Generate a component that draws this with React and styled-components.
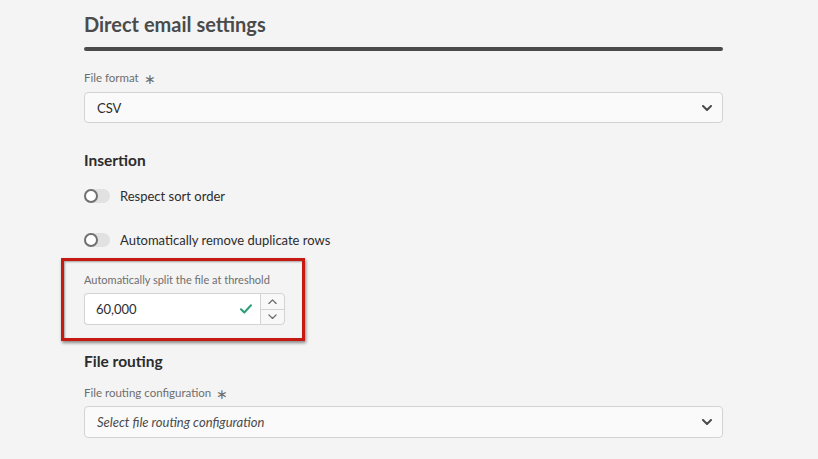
import React from "react";
import styled, { createGlobalStyle } from "styled-components";

const Global = createGlobalStyle`
  html, body { margin: 0; padding: 0; background: #f4f4f4; }
  body { font-family: Lato, "Open Sans", sans-serif; -webkit-font-smoothing: antialiased; }
  * { box-sizing: border-box; }
`;

const Page = styled.div`
  width: 818px;
  height: 459px;
  overflow: hidden;
  background: #f4f4f4;
  padding-left: 84px;
`;

const Column = styled.div`
  width: 639px;
  display: flex;
  flex-direction: column;
`;

const Title = styled.h1`
  margin: 12px 0 0;
  font-size: 20px;
  line-height: 24px;
  font-weight: 700;
  color: #4b4b4b;
`;

const Divider = styled.div`
  margin-top: 11px;
  height: 4px;
  border-radius: 2px;
  background: #4b4b4b;
`;

const Label = styled.div`
  margin-top: ${(p) => p.$mt}px;
  font-size: ${(p) => p.$size || 11.5}px;
  line-height: 16px;
  color: #6e6e6e;
  white-space: nowrap;
  display: flex;
  align-items: center;
  gap: 5px;
`;

const Star = styled.span`
  font-size: 14px;
  line-height: 16px;
  color: #6e6e6e;
  transform: translateY(1px);
`;

const Select = styled.div`
  margin-top: ${(p) => p.$mt}px;
  height: ${(p) => p.$h}px;
  border: 1px solid #d3d3d3;
  border-radius: 4px;
  background: #fafafa;
  display: flex;
  align-items: center;
  justify-content: space-between;
  padding: 0 10px 0 12px;
`;

const SelectText = styled.span`
  font-size: 13px;
  color: ${(p) => (p.$placeholder ? "#4b4b4b" : "#2c2c2c")};
  font-style: ${(p) => (p.$placeholder ? "italic" : "normal")};
`;

const Heading = styled.h2`
  margin: ${(p) => p.$mt}px 0 0;
  font-size: 15.5px;
  line-height: 20px;
  font-weight: 700;
  color: #2c2c2c;
`;

const ToggleRow = styled.label`
  margin-top: ${(p) => p.$mt}px;
  height: 20px;
  display: flex;
  align-items: center;
  gap: 10px;
  font-size: 13px;
  color: #2c2c2c;
`;

const Track = styled.span`
  position: relative;
  width: 26px;
  height: 14px;
  border-radius: 7px;
  background: #e1e1e1;
  flex: none;
`;

const Knob = styled.span`
  position: absolute;
  left: 0;
  top: 0;
  width: 14px;
  height: 14px;
  border-radius: 50%;
  border: 2px solid #707070;
  background: #fff;
`;

const Highlight = styled.div`
  margin: 8px 0 0 -23px;
  width: 244px;
  border: 3px solid #c41a12;
  box-shadow: 1px 2px 3px rgba(0, 0, 0, 0.45), inset 1px 1px 2px rgba(0, 0, 0, 0.35);
  padding: 11px 17px 13px 20px;
`;

const NumberField = styled.div`
  margin-top: 5px;
  display: flex;
  height: 32px;
  width: 201px;
`;

const NumberInput = styled.div`
  flex: 1;
  border: 1px solid #d3d3d3;
  border-right: none;
  border-radius: 4px 0 0 4px;
  background: #fff;
  display: flex;
  align-items: center;
  justify-content: space-between;
  padding: 0 8px 0 11px;
  font-size: 13px;
  color: #2c2c2c;
`;

const Stepper = styled.div`
  width: 25px;
  display: flex;
  flex-direction: column;
  border: 1px solid #d3d3d3;
  border-radius: 0 4px 4px 0;
  background: #f8f8f8;
`;

const StepButton = styled.div`
  flex: 1;
  display: flex;
  align-items: center;
  justify-content: center;
  & + & { border-top: 1px solid #d3d3d3; }
`;

const Chevron = ({ up, size = 10, color = "#4b4b4b", w = 2 }) => (
  <svg width={size} height={size * 0.6} viewBox="0 0 10 6" fill="none">
    <path
      d={up ? "M1 5 L5 1 L9 5" : "M1 1 L5 5 L9 1"}
      stroke={color}
      strokeWidth={w}
      strokeLinecap="round"
      strokeLinejoin="round"
    />
  </svg>
);

const Check = () => (
  <svg width="12" height="10" viewBox="0 0 12 10" fill="none">
    <path d="M1 5.2 L4.3 8.5 L11 1.2" stroke="#2d9d78" strokeWidth="2" strokeLinecap="round" strokeLinejoin="round" />
  </svg>
);

const Toggle = ({ mt, children }) => (
  <ToggleRow $mt={mt}>
    <Track>
      <Knob />
    </Track>
    {children}
  </ToggleRow>
);

export default function App() {
  return (
    <>
      <Global />
      <Page>
        <Column>
          <Title>Direct email settings</Title>
          <Divider />
          <Label $mt={19}>
            File format <Star>∗</Star>
          </Label>
          <Select $mt={6} $h={31}>
            <SelectText>CSV</SelectText>
            <Chevron />
          </Select>
          <Heading $mt={27}>Insertion</Heading>
          <Toggle mt={16}>Respect sort order</Toggle>
          <Toggle mt={24}>Automatically remove duplicate rows</Toggle>
          <Highlight>
            <Label $mt={0} $size={11}>Automatically split the file at threshold</Label>
            <NumberField>
              <NumberInput>
                60,000
                <Check />
              </NumberInput>
              <Stepper>
                <StepButton>
                  <Chevron up size={9} color="#6e6e6e" w={1.5} />
                </StepButton>
                <StepButton>
                  <Chevron size={9} color="#6e6e6e" w={1.5} />
                </StepButton>
              </Stepper>
            </NumberField>
          </Highlight>
          <Heading $mt={10}>File routing</Heading>
          <Label $mt={14}>
            File routing configuration <Star>∗</Star>
          </Label>
          <Select $mt={5} $h={32}>
            <SelectText $placeholder>Select file routing configuration</SelectText>
            <Chevron />
          </Select>
        </Column>
      </Page>
    </>
  );
}
